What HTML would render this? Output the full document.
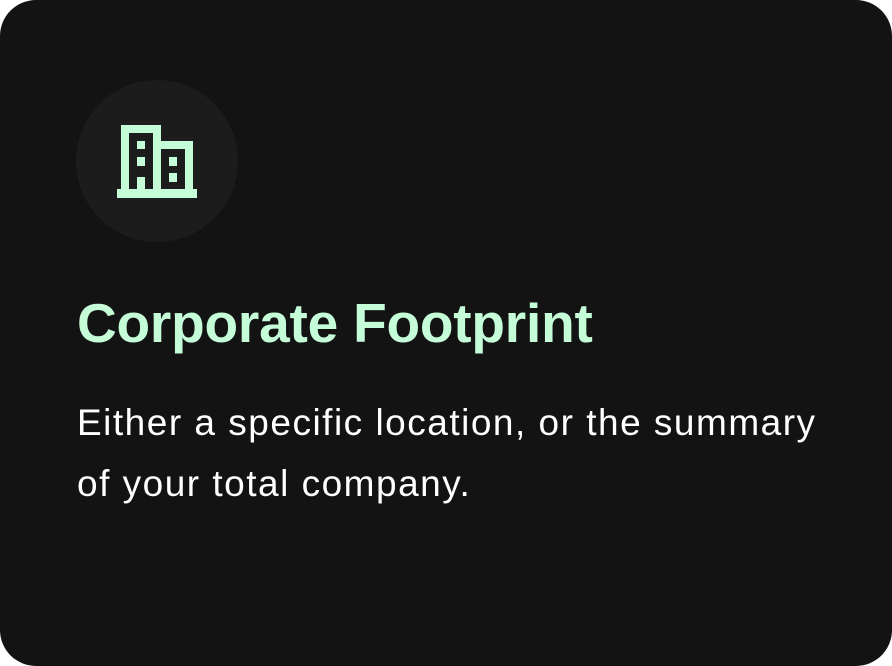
<!DOCTYPE html>
<html><head><style>
html,body{margin:0;padding:0;background:#fff;}
.card{position:absolute;left:0;top:0;width:892px;height:666px;background:#131313;border-radius:36px;overflow:hidden;}
.circ{position:absolute;left:76px;top:80px;width:162px;height:162px;border-radius:50%;background:#1c1c1c;}
.t{position:absolute;left:77px;top:290px;font-family:"Liberation Sans",sans-serif;font-weight:bold;font-size:55px;letter-spacing:-0.2px;color:#c4fdd8;white-space:nowrap;line-height:66px;}
.b{position:absolute;left:77px;top:392px;font-family:"Liberation Sans",sans-serif;font-size:37px;letter-spacing:1.5px;color:#fff;line-height:61px;width:810px;white-space:nowrap;}
</style></head><body>
<div class="card">
<div class="circ"></div>
<svg style="position:absolute;left:0;top:0" width="892" height="666">
<g fill="#c4fdd8">
<rect x="117" y="189" width="80" height="9"/>
<rect x="121" y="125" width="8" height="66"/>
<rect x="121" y="125" width="40" height="8"/>
<rect x="153" y="125" width="8" height="66"/>
<rect x="153" y="141" width="40" height="8"/>
<rect x="185" y="141" width="8" height="50"/>
<rect x="137" y="141" width="8" height="8"/>
<rect x="137" y="157" width="8" height="9"/>
<rect x="137" y="177" width="8" height="14"/>
<rect x="169" y="157" width="8" height="9"/>
<rect x="169" y="173" width="8" height="9"/>
</g></svg>
<div class="t">Corporate Footprint</div>
<div class="b">Either a specific location, or the summary<br>of your total company.</div>
</div>
</body></html>
